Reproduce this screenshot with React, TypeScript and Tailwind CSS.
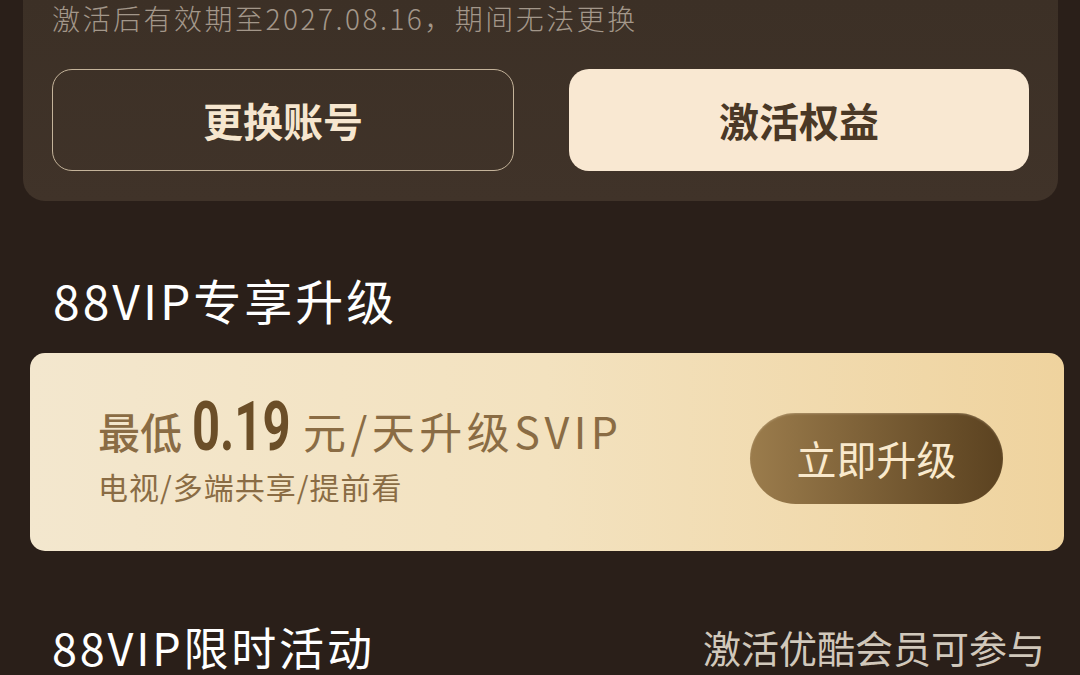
import React from 'react';

const cjk = "font-['Noto_Sans_CJK_SC','Noto_Sans',sans-serif]";

export default function App() {
  return (
    <div className={`w-[1080px] h-[675px] overflow-hidden bg-[#2a1f19] ${cjk}`}>
      {/* activation card (top cut off) */}
      <div className="ml-[23px] mr-[22px] rounded-b-[22px] bg-gradient-to-b from-[#3c3026] to-[#403329] px-[29px] pb-[30px]">
        <p className="h-[36px] leading-[36px] text-[28px] tracking-[2.5px] font-light text-[#a3978a]">
          激活后有效期至2027.08.16，期间无法更换
        </p>
        <div className="mt-[33px] flex gap-[55px]">
          <button className="flex-1 h-[102px] rounded-[20px] border-[1.5px] border-[#c4b39a] text-[40px] font-bold text-[#f6e6cf]">
            更换账号
          </button>
          <button className="flex-1 h-[102px] rounded-[20px] bg-[#f9e8d2] text-[40px] font-bold text-[#4a3826]">
            激活权益
          </button>
        </div>
      </div>

      {/* upgrade section */}
      <h2 className="mt-[70px] ml-[53px] h-[56px] leading-[56px] text-[48px] tracking-[3px] font-normal text-white">
        88VIP专享升级
      </h2>
      <div className="mt-[26px] ml-[30px] mr-[16px] h-[198px] rounded-[15px] bg-gradient-to-r from-[#f3e7ce] via-[#f3e2bf] to-[#efd39e] pl-[68px] pr-[61px] flex items-center justify-between">
        <div className="pt-[2px]">
          <div className="flex items-center h-[60px] text-[42px] font-medium text-[#8a6c44]">
            <span>最低</span>
            <span className="ml-[10px] w-[94px] inline-block">
              <span className="inline-block origin-left scale-x-[0.72] font-['Roboto',sans-serif] font-bold text-[68px] leading-[60px] text-[#6b4e28]">
                0.19
              </span>
            </span>
            <span className="ml-[17px] font-normal text-[43px] tracking-[4.5px]">元/天升级SVIP</span>
          </div>
          <p className="mt-[6px] text-[30px] leading-[40px] tracking-[1px] text-[#8a6c44]">
            电视/多端共享/提前看
          </p>
        </div>
        <button className="mt-[12px] w-[253px] h-[91px] rounded-full bg-gradient-to-r from-[#9b7c4c] to-[#5b4220] text-[40px] text-[#f9e9cc] shadow-[inset_0_1px_2px_rgba(255,240,210,0.25)]">
          立即升级
        </button>
      </div>

      {/* limited activity */}
      <div className="mt-[71px] pl-[52px] pr-[35px] flex items-center justify-between h-[50px]">
        <span className="text-[45px] leading-[50px] text-white tracking-[2.8px]">
          88VIP限时活动
        </span>
        <span className="text-[38px] leading-[50px] text-[#d1c8bb]">激活优酷会员可参与</span>
      </div>
    </div>
  );
}
